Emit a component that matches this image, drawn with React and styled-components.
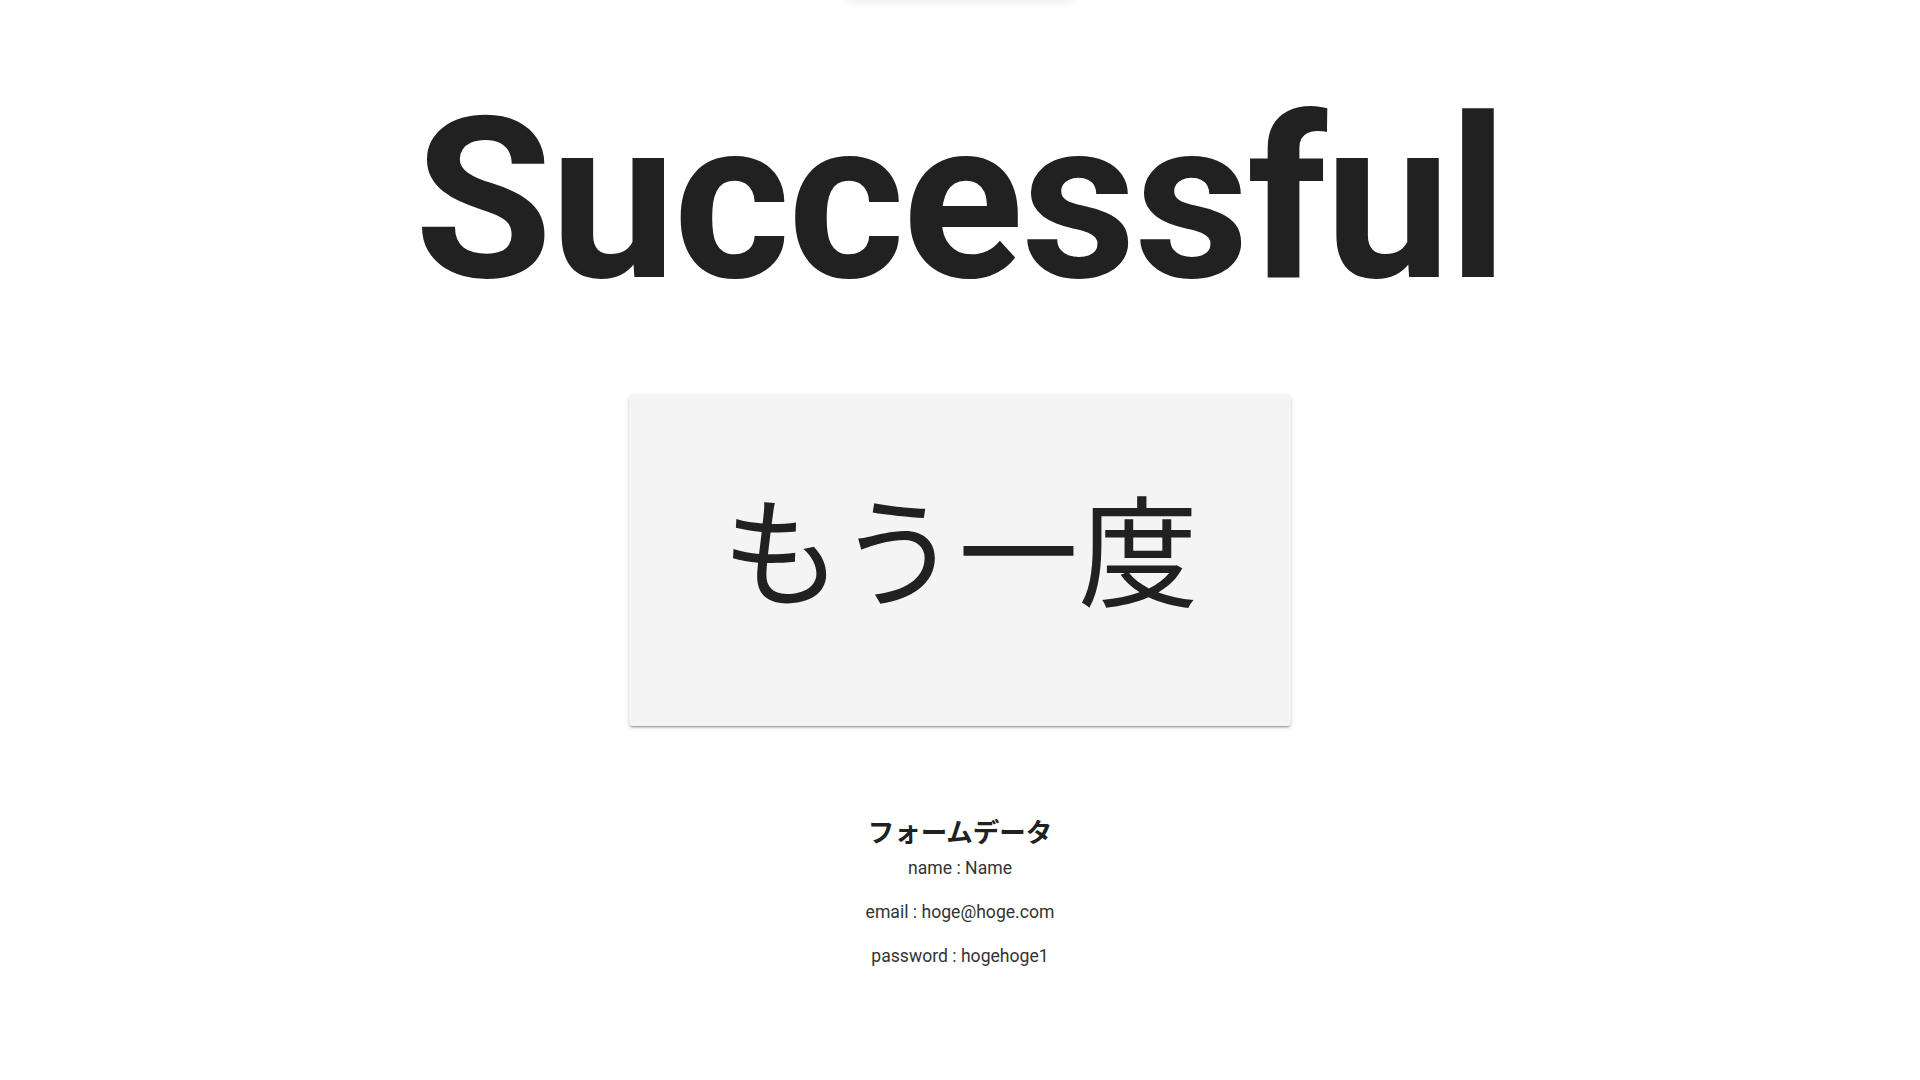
import styled, { createGlobalStyle } from 'styled-components';

const GlobalStyle = createGlobalStyle`
  html, body {
    margin: 0;
    padding: 0;
    background: #fff;
    font-family: Roboto, "Noto Sans CJK JP", sans-serif;
    color: rgba(0, 0, 0, 0.87);
  }
`;

const Page = styled.div`
  display: flex;
  flex-direction: column;
  align-items: center;
  min-height: 100vh;
  overflow: hidden;
`;

const TopCard = styled.div`
  width: 230px;
  height: 60px;
  margin-top: -60px;
  border-radius: 4px;
  box-shadow: 0 3px 6px rgba(0, 0, 0, 0.06);
`;

const Title = styled.h1`
  margin: 89px 0 0;
  font-family: Roboto, sans-serif;
  font-size: 224px;
  font-weight: 700;
  line-height: 1;
  color: #212121;
  letter-spacing: -2.2px;
`;

const RetryButton = styled.button`
  margin-top: 82px;
  width: 662px;
  height: 331px;
  padding: 0 0 30px;
  border: none;
  outline: none;
  border-radius: 4px;
  background-color: #f4f4f4;
  color: #212121;
  font-family: "Noto Sans CJK JP", sans-serif;
  font-size: 120px;
  font-weight: 400;
  cursor: pointer;
  box-shadow: 0 3px 1px -2px rgba(0, 0, 0, 0.2), 0 2px 2px 0 rgba(0, 0, 0, 0.14),
    0 1px 5px 0 rgba(0, 0, 0, 0.12);
`;

const FormData = styled.section`
  margin-top: 87px;
  display: flex;
  flex-direction: column;
  align-items: center;
`;

const FormTitle = styled.h3`
  margin: 0;
  font-family: "Noto Sans CJK JP", sans-serif;
  font-size: 26.5px;
  font-weight: 700;
  line-height: 36px;
  color: #212121;
`;

const FieldList = styled.div`
  margin-top: 5px;
  display: flex;
  flex-direction: column;
  align-items: center;
  gap: 16px;
`;

const Field = styled.p`
  margin: 0;
  font-family: Roboto, sans-serif;
  font-size: 17.6px;
  line-height: 28px;
  color: #333;
`;

const fields = [
  { label: 'name', value: 'Name' },
  { label: 'email', value: 'hoge@hoge.com' },
  { label: 'password', value: 'hogehoge1' },
];

const App = () => {
  return (
    <Page>
      <GlobalStyle />
      <TopCard />
      <Title>Successful</Title>
      <RetryButton>もう一度</RetryButton>
      <FormData>
        <FormTitle>フォームデータ</FormTitle>
        <FieldList>
          {fields.map((f) => (
            <Field key={f.label}>
              {f.label} : {f.value}
            </Field>
          ))}
        </FieldList>
      </FormData>
    </Page>
  );
};

export default App;
